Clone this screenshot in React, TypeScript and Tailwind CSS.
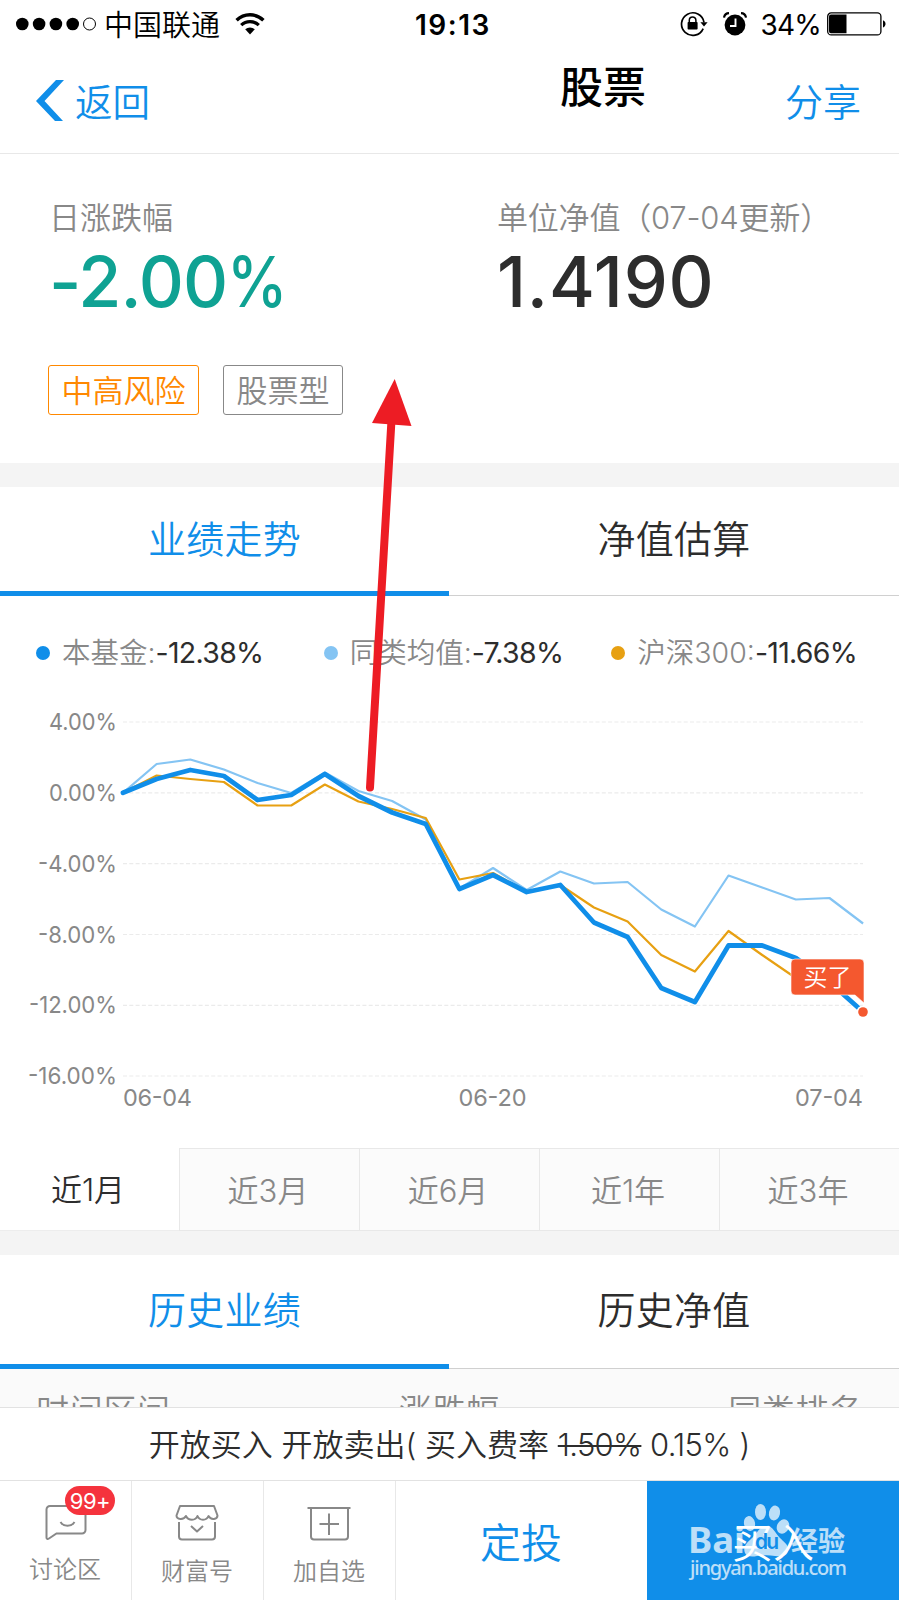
import React from "react";

const START_X = 123;
const STEP = 33.64;

const gridLines = [
  { label: "4.00%", y: 722, width: 68 },
  { label: "0.00%", y: 792.8, width: 68 },
  { label: "-4.00%", y: 863.6, width: 79 },
  { label: "-8.00%", y: 934.5, width: 79 },
  { label: "-12.00%", y: 1005.3, width: 88 },
  { label: "-16.00%", y: 1076, width: 89 },
];

const fund = [
  792.8, 779, 770, 776, 800, 795, 774, 796, 812.5, 824, 889, 875, 892, 885,
  922.5, 937, 988, 1002, 945.5, 945.5, 958, 982, 1012,
];
const average = [
  792.8, 764, 759.5, 769.5, 783, 793, 772.5, 791, 801, 819.5, 888.5, 868, 890,
  871.5, 883.5, 882, 909.5, 926.5, 875.5, 887.5, 899.5, 898, 923.5,
];
const hs300 = [
  792.8, 775.5, 779, 782, 805.5, 805.5, 784.5, 801.5, 809, 818, 879.5, 873,
  892, 885, 907.5, 921.5, 955, 971.5, 931, 955, 978, 984, 988,
];

const toPoints = (values: number[]) =>
  values.map((y, i) => `${START_X + i * STEP},${y}`).join(" ");

const legends = [
  { name: "本基金:", value: "-12.38%", dot: "bg-[#108ee9]" },
  { name: "同类均值:", value: "-7.38%", dot: "bg-[#84c4f3]" },
  { name: "沪深300:", value: "-11.66%", dot: "bg-[#e7a012]" },
];

const periods = ["近1月", "近3月", "近6月", "近1年", "近3年"];

const StatusBar = () => {
  return (
    <div className="flex h-12 items-center text-black">
      <div className="flex w-[415px] items-center pl-4">
        <svg width="82" height="16" viewBox="0 0 82 16">
          <circle cx="6.3" cy="8" r="6.3" />
          <circle cx="23.1" cy="8" r="6.3" />
          <circle cx="39.9" cy="8" r="6.3" />
          <circle cx="56.7" cy="8" r="6.3" />
          <circle cx="73.5" cy="8" r="6" fill="none" stroke="#000" />
        </svg>
        <span className="ml-[6px] pt-[3px] text-[29px] font-[350] leading-[45px]">中国联通</span>
        <svg className="ml-[15px]" width="30" height="22" viewBox="0 0 30 22">
          <path d="M1.6 7.3a19 19 0 0 1 26.8 0" fill="none" stroke="#000" strokeWidth="3.4" />
          <path d="M6.2 12.2a12.6 12.6 0 0 1 17.6 0" fill="none" stroke="#000" strokeWidth="3.2" />
          <path d="M10.2 16.3a7.2 7.2 0 0 1 9.6 0L15 21.4z" />
        </svg>
      </div>
      <span className="pt-[2px] text-[28px] font-semibold tracking-[1.5px]">19:13</span>
      <div className="ml-auto flex items-center pr-[12px]">
        <svg width="28" height="26" viewBox="0 0 28 26">
          <path d="M23.2 17.6A11.3 11.3 0 1 1 24 11.4" fill="none" stroke="#000" strokeWidth="1.7" />
          <path d="M20.4 11.2h7.2L24 15.6z" />
          <rect x="7.6" y="11" width="10" height="7.6" rx="0.8" />
          <path d="M9.3 11.4V9.2a3.3 3.3 0 0 1 6.6 0v2.2" fill="none" stroke="#000" strokeWidth="1.5" />
        </svg>
        <svg className="ml-[15px]" width="24" height="24" viewBox="0 0 24 24">
          <circle cx="12" cy="13" r="10.4" />
          <path d="M1 5.6C1.5 3 3.3 1.3 6 1.2M23 5.6C22.5 3 20.7 1.3 18 1.2" fill="none" stroke="#000" strokeWidth="2.2" />
          <path d="M12.5 6.5v7.5H7" fill="none" stroke="#fff" strokeWidth="1.9" />
        </svg>
        <span className="ml-[14px] pt-[2px] text-[28px] tracking-[-0.8px]">34%</span>
        <svg className="ml-[6px]" width="60" height="24" viewBox="0 0 60 24">
          <rect x="0.7" y="0.9" width="53.2" height="22" rx="3.5" fill="none" stroke="#000" strokeWidth="1.3" />
          <path d="M4 2.5h15.5v18.8H4a2 2 0 0 1-2-2V4.5a2 2 0 0 1 2-2zM56 8.2c3.400 1.500 3.400 5.900 0 7.400z" />
        </svg>
      </div>
    </div>
  );
};

const Tabs = ({ active, other }: { active: string; other: string }) => {
  return (
    <div className="flex text-[38px] tracking-[0.3px]">
      <div className="flex h-full w-[449px] items-center justify-center border-b-[5px] border-[#108ee9] pt-px text-[#108ee9]">
        {active}
      </div>
      <div className="flex h-full flex-1 items-center justify-center border-b border-[#d0d0d0] pb-[3px] text-[#2d2d2d]">
        {other}
      </div>
    </div>
  );
};

const TrendChart = () => {
  return (
    <svg className="block" width="899" height="448" viewBox="0 700 899 448">
      {gridLines.map((line) => (
        <g key={line.label}>
          <text
            x={117 - line.width}
            y={line.y + 8}
            fontSize="23.5"
            fill="#888"
            textLength={line.width}
            lengthAdjust="spacingAndGlyphs"
          >
            {line.label}
          </text>
          <path d={`M123 ${line.y}H863`} stroke="#ebebeb" strokeWidth="1.2" strokeDasharray="4 2.3" />
        </g>
      ))}
      <g fontSize="23.5" fill="#888">
        <text x="123" y="1106" textLength="69">06-04</text>
        <text x="458.5" y="1106" textLength="68">06-20</text>
        <text x="795" y="1106" textLength="68">07-04</text>
      </g>
      <g fill="none" strokeLinejoin="round">
        <polyline points={toPoints(average)} stroke="#84c4f3" strokeWidth="2.2" />
        <polyline points={toPoints(hs300)} stroke="#e7a012" strokeWidth="2.2" />
        <polyline points={toPoints(fund)} stroke="#108ee9" strokeWidth="4.8" strokeLinecap="round" />
      </g>
      <path
        d="M795 959h65a4 4 0 0 1 4 4v40l-9-8h-60a4 4 0 0 1-4-4v-28a4 4 0 0 1 4-4z"
        fill="#f4582f"
        stroke="#fff"
        strokeWidth="0.6"
      />
      <text x="803.5" y="985.5" fontSize="24" fill="#fff" fontWeight="350">买了</text>
      <circle cx="863" cy="1012" r="6.5" fill="#fff" />
      <circle cx="863" cy="1012" r="4.8" fill="#f4582f" />
    </svg>
  );
};

const BaiduMark = () => {
  return (
    <svg className="absolute left-0 top-0" width="251" height="119" viewBox="648 1481 251 119">
      <g fill="#fff" opacity="0.72">
        <ellipse cx="750.5" cy="1523.5" rx="5.5" ry="7.5" transform="rotate(-12 750.5 1523.5)" />
        <ellipse cx="761.5" cy="1512" rx="5.5" ry="8" />
        <ellipse cx="775.5" cy="1513" rx="5.5" ry="7.5" transform="rotate(12 775.5 1513)" />
        <ellipse cx="784" cy="1526.5" rx="6" ry="7.5" transform="rotate(25 784 1526.5)" />
        <path d="M768 1526c-8 0-10 8-16 13-6 5-8 9-6 14 2 4 7 4 12 3 7-1 12-1 18 0 7 1 12 0 13-5 1-6-4-9-8-13-5-5-7-12-13-12z" />
        <text x="689" y="1553" fontSize="36" fontWeight="700" textLength="57" lengthAdjust="spacingAndGlyphs" fontFamily="Noto Sans">
          Bai
        </text>
        <text x="792" y="1551" fontSize="27" fontWeight="700" textLength="54">经验</text>
        <text x="691" y="1574.5" fontSize="20" fontWeight="500" textLength="157" fontFamily="Noto Sans">
          jingyan.baidu.com
        </text>
      </g>
      <text x="756" y="1549" fontSize="21" fontWeight="600" fill="#108ee9" textLength="24">du</text>
    </svg>
  );
};

const App = () => {
  return (
    <div className="relative h-[1600px] w-[899px] overflow-hidden bg-white font-[Inter,'Noto_Sans_CJK_SC',sans-serif] font-[350]">
      <div className="font-normal">
        <StatusBar />
      </div>

      <div className="flex h-[106px] border-b border-[#e8e8e8] text-[#108ee9]">
        <div className="flex w-[560px] items-start pl-9 pt-8">
          <svg width="28" height="41" viewBox="0 0 28 41">
            <path d="M28 0H20L0 21l19 20h8L8.5 21z" fill="#108ee9" />
          </svg>
          <span className="ml-[11px] pt-[2px] text-[37.5px] leading-[42px]">返回</span>
        </div>
        <span className="pt-[18px] text-[43px] font-medium leading-[42px] text-black">股票</span>
        <span className="ml-auto pr-[38px] pt-[33px] text-[38px] leading-[42px]">分享</span>
      </div>

      <div className="h-[309px]">
        <div className="flex pl-[49px] pt-[42px]">
          <div className="w-[448px]">
            <p className="pt-px text-[31px] leading-[42px] text-[#888]">日涨跌幅</p>
            <p className="text-[70px] font-medium leading-[86px] tracking-[-1px] text-[#0fa293]">
              -2.00<span className="inline-block origin-left scale-x-[0.87]">%</span>
            </p>
          </div>
          <div>
            <p className="pt-px text-[31px] leading-[42px] tracking-[-0.2px] text-[#888]">单位净值（07-04更新）</p>
            <p className="text-[70px] font-medium leading-[86px] tracking-[0.8px] text-[#2d2d2d]">1.4190</p>
          </div>
        </div>
        <div className="mt-[40px] flex gap-6 pl-12 text-[31px]">
          <span className="flex h-[50px] w-[151px] items-center justify-center rounded-[3px] border border-[#ff8800] pt-[3px] text-[#ff8800]">
            中高风险
          </span>
          <span className="flex h-[50px] w-[120px] items-center justify-center rounded-[3px] border border-[#888] pt-[3px] text-[#888]">
            股票型
          </span>
        </div>
      </div>

      <div className="h-6 bg-[#f4f4f4]" />
      <div className="grid h-[109px]">
        <Tabs active="业绩走势" other="净值估算" />
      </div>

      <div className="flex h-[104px] pl-9 pt-2">
        {legends.map((item) => (
          <div key={item.name} className="flex h-[97px] w-[288px] items-center whitespace-nowrap text-[28.5px]">
            <span className={`mr-3 size-[14px] rounded-full ${item.dot}`} />
            <span className="pt-[2px] text-[#888]">{item.name}</span>
            <span className="pt-[2px] font-normal tracking-[-0.7px] text-[#2d2d2d]">{item.value}</span>
          </div>
        ))}
      </div>
      <div className="font-normal">
        <TrendChart />
      </div>

      <div className="flex h-[83px] text-[31px]">
        {periods.map((period, i) => (
          <div
            key={period}
            className={
              i === 0
                ? "flex w-[179px] items-center justify-center border-b border-[#ededed] pr-[3px] pt-[3px] text-[#2d2d2d]"
                : "flex w-[180px] items-center justify-center border-y border-l border-[#e8e8e8] bg-[#fbfbfb] pr-[3px] pt-[3px] text-[#888]"
            }
          >
            {period}
          </div>
        ))}
      </div>
      <div className="h-6 bg-[#f4f4f4]" />
      <div className="grid h-[114px]">
        <Tabs active="历史业绩" other="历史净值" />
      </div>

      <div className="flex h-[38px] justify-between overflow-hidden bg-[#fafafa] px-[36px] pt-[18px] text-[33px] leading-[48px] tracking-[0.7px] text-[#888]">
        <span>时间区间</span>
        <span>涨跌幅</span>
        <span>同类排名</span>
      </div>

      <div className="flex h-[74px] items-center justify-center border-y border-[#e2e2e2] bg-white pt-[2px] text-[31px] text-[#2d2d2d]">
        <p className="whitespace-pre">
          开放买入 开放卖出( 买入费率 <span className="tracking-[-0.7px] line-through decoration-2">1.50%</span> <span className="tracking-[-0.7px]">0.15%</span> )
        </p>
      </div>

      <div className="flex h-[119px] text-[24px] leading-[30px] text-[#888]">
        <div className="relative flex w-[132px] flex-col items-center border-r border-[#e8e8e8] pt-[23px]">
          <svg width="42" height="38" viewBox="0 0 42 38" fill="none" stroke="#888" strokeWidth="2">
            <path d="M5 2h32a3.5 3.5 0 0 1 3.5 3.5v20.5a3.5 3.5 0 0 1-3.5 3.5H11.5L4 34.5c-1.5 1-2.5.5-2.5-1V5.5A3.5 3.5 0 0 1 5 2z" />
            <path d="M15.5 18c3 5 11 5 14 0" />
          </svg>
          <span className="mt-[13px] pr-px">讨论区</span>
          <span className="absolute left-[65px] top-[5px] flex h-[29px] w-[50px] items-center justify-center rounded-full bg-[#f5333d] text-[22px] font-normal tracking-[-0.5px] text-white">
            99+
          </span>
        </div>
        <div className="flex w-[132px] flex-col items-center border-r border-[#e8e8e8] pt-[23px]">
          <svg className="-ml-px" width="44" height="38" viewBox="0 0 44 38" fill="none" stroke="#888" strokeWidth="2" strokeLinejoin="round">
            <path d="M5 2h34l3.5 9.5c0 4-6.5 5-9 .5-2 5-9 5-11 0-2 5-9 5-11.5 0-2.5 4.5-9.5 3.5-9.5-.5z" />
            <path d="M4 18v14.5A3 3 0 0 0 7 35.5h30a3 3 0 0 0 3-3V18M16 22l6 5.5 6-5.5" />
          </svg>
          <span className="mt-[15px] pr-px">财富号</span>
        </div>
        <div className="flex w-[132px] flex-col items-center border-r border-[#e8e8e8] pt-[23px]">
          <svg className="-ml-px" width="44" height="38" viewBox="0 0 44 38" fill="none" stroke="#888" strokeWidth="2">
            <path d="M0.5 4h43M4 4v28.5a3 3 0 0 0 3 3h31a3 3 0 0 0 3-3V4M22 9.5v21.5M12.500 20h19.500" />
          </svg>
          <span className="mt-[15px] pr-px">加自选</span>
        </div>
        <div className="flex w-[251px] items-center justify-center pr-px pt-1 text-[41px] text-[#108ee9]">定投</div>
        <div className="relative flex flex-1 items-center justify-center bg-[#108ee9] pt-1 text-[41px] text-white">
          买入
          <BaiduMark />
        </div>
      </div>

      <svg className="pointer-events-none absolute left-[360px] top-[370px]" width="60" height="430" viewBox="360 370 60 430">
        <path d="M391.500 420L370 787.500" stroke="#ed1c24" strokeWidth="8" strokeLinecap="round" />
        <path d="M394.700 379L411.500 426 372 423z" fill="#ed1c24" />
      </svg>
    </div>
  );
};

export default App;
